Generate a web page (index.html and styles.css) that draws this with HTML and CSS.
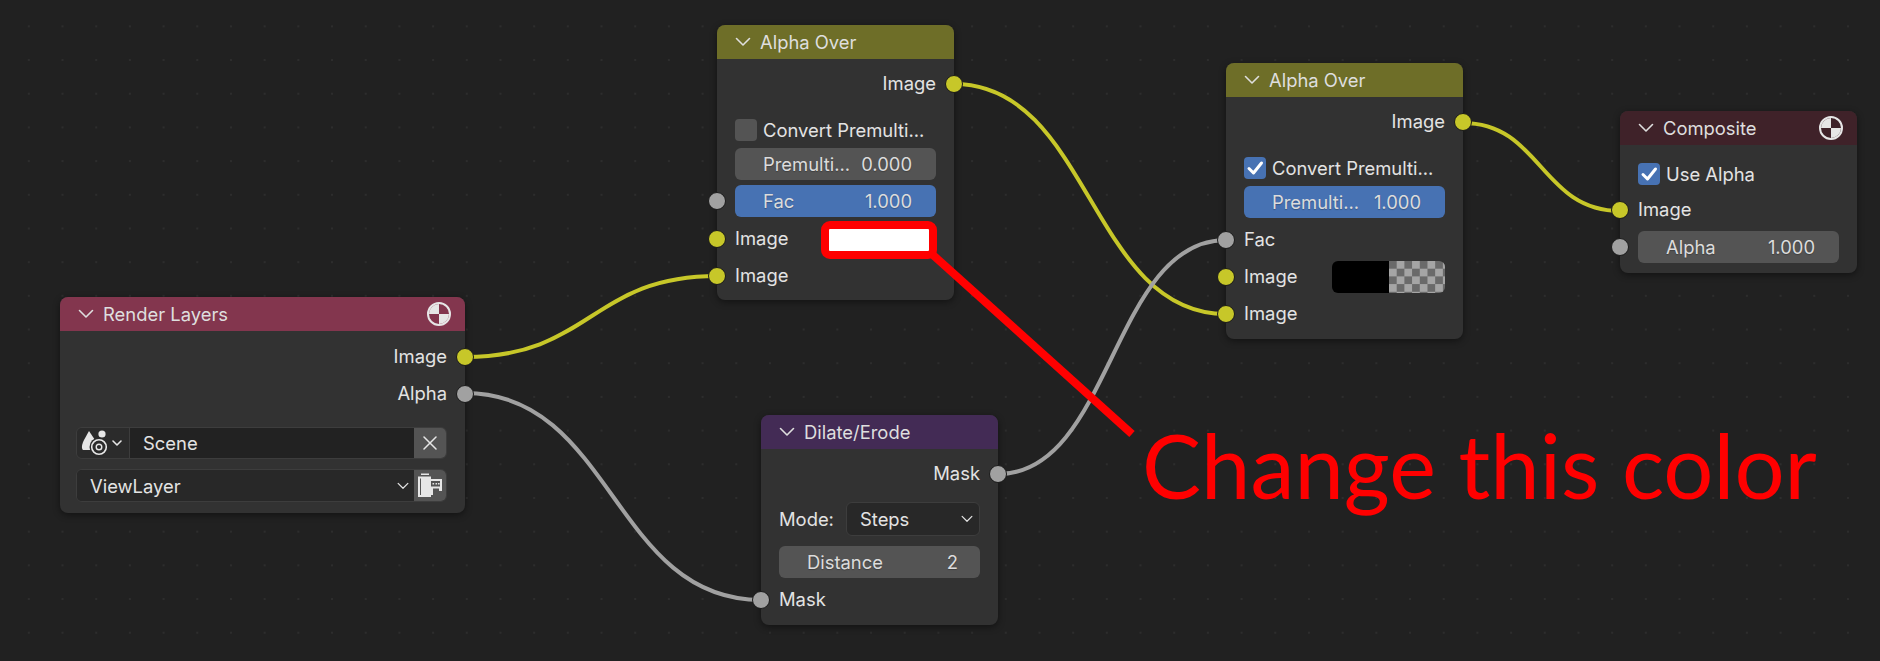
FILE: index.html
```html
<!DOCTYPE html>
<html lang="en">
<head>
    <meta charset="UTF-8">
    <title>Compositor nodes</title>
    <link rel="stylesheet" href="styles.css">
</head>
<body>
    <svg width="0" height="0" class="defs">
        <defs>
            <symbol id="chevron" viewBox="0 0 16 10">
                <path d="M1.5 1.5 L8 8 L14.5 1.5" fill="none" stroke="currentColor" stroke-width="1.6" stroke-linecap="round" stroke-linejoin="round"/>
            </symbol>
            <symbol id="disc" viewBox="0 0 24 24">
                <circle cx="12" cy="12" r="11" fill="none" stroke="#e6e6e6" stroke-width="2"/>
                <path d="M12 12 L12 2 A10 10 0 0 0 2 12 Z M12 12 L22 12 A10 10 0 0 1 12 22 Z" fill="#e6e6e6"/>
            </symbol>
            <symbol id="tick" viewBox="0 0 22 22">
                <path d="M5 11.5 L9.5 16 L17.5 6" fill="none" stroke="#fff" stroke-width="3" stroke-linecap="round" stroke-linejoin="round"/>
            </symbol>
        </defs>
    </svg>

    <div class="canvas">
        <svg class="wires" width="1880" height="661">
            <path class="wire yellow" d="M465 357 C591 357 591 276 717 276"/>
            <path class="wire grey" d="M465 393 C613 393 613 600 761 600"/>
            <path class="wire yellow" d="M954 84 C1090 84 1090 314 1226 314"/>
            <path class="wire grey" d="M998 474 C1112 474 1112 240 1226 240"/>
            <path class="wire yellow" d="M1463 123 C1541 123 1541 211 1620 211"/>
        </svg>

        <div class="node node-render">
            <div class="node-header header-render">
                <svg class="chevron"><use href="#chevron"/></svg>
                <span>Render Layers</span>
                <svg class="disc"><use href="#disc"/></svg>
            </div>
            <div class="node-body body-render">
                <div class="row out"><span>Image</span><i class="socket yellow"></i></div>
                <div class="row out"><span>Alpha</span><i class="socket grey"></i></div>
                <div class="field-group scene-group">
                    <div class="icon-drop">
                        <svg width="44" height="30" viewBox="0 0 44 30">
                            <path d="M8 3 L16 15 L13 22 L2 22 C0 20 1 16 3 12 Z" fill="#e6e6e6"/>
                            <circle cx="21" cy="6" r="3.600" fill="#e6e6e6"/>
                            <circle cx="18" cy="19" r="9.500" fill="#2b2b2b"/>
                            <circle cx="18" cy="19" r="7.300" fill="none" stroke="#e6e6e6" stroke-width="1.600"/>
                            <circle cx="18" cy="19" r="2.800" fill="none" stroke="#e6e6e6" stroke-width="1.400"/>
                            <path d="M32 13 L36 17 L40 13" fill="none" stroke="#e6e6e6" stroke-width="1.600" stroke-linecap="round" stroke-linejoin="round"/>
                        </svg>
                    </div>
                    <div class="scene-name">Scene</div>
                    <div class="icon-btn">
                        <svg width="14" height="14" viewBox="0 0 14 14">
                            <path d="M1 1 L13 13 M13 1 L1 13" stroke="#e6e6e6" stroke-width="1.500" stroke-linecap="round"/>
                        </svg>
                    </div>
                </div>
                <div class="field-group layer-group">
                    <div class="layer-name">
                        <span>ViewLayer</span>
                        <svg class="chevron-small"><use href="#chevron"/></svg>
                    </div>
                    <div class="icon-btn">
                        <svg width="26" height="26" viewBox="0 0 26 26">
                            <path d="M4 0.500 H12 V2 H4 Z" fill="#e6e6e6"/>
                            <path d="M1 3.500 H14 V6 H25 V18 H22 V15.500 H16 V22 H14 V24 H1 Z" fill="#e6e6e6"/>
                            <path d="M3 5.500 H4 V22 H3 Z" fill="#545454"/>
                            <path d="M14 8 V13.500 H23 V8 Z" fill="#545454"/>
                            <path d="M15.500 10 h1.600 v1.600 h-1.600 Z M18.500 10 h1.600 v1.600 h-1.600 Z M21 10 h1.600 v1.600 h-1.600 Z" fill="#e6e6e6"/>
                        </svg>
                    </div>
                </div>
            </div>
        </div>

        <div class="node node-over-a">
            <div class="node-header header-over">
                <svg class="chevron"><use href="#chevron"/></svg>
                <span>Alpha Over</span>
            </div>
            <div class="node-body">
                <div class="row out"><span>Image</span><i class="socket yellow"></i></div>
                <div class="check-row props-first">
                    <div class="checkbox"></div>
                    <span>Convert Premulti...</span>
                </div>
                <div class="slider"><span>Premulti...</span><span>0.000</span></div>
                <div class="slider blue slider-fac"><span>Fac</span><span>1.000</span><i class="socket grey"></i></div>
                <div class="row color-row">
                    <span>Image</span><i class="socket yellow"></i>
                    <div class="swatch swatch-white"></div>
                </div>
                <div class="row"><span>Image</span><i class="socket yellow"></i></div>
            </div>
        </div>

        <div class="node node-over-b">
            <div class="node-header header-over">
                <svg class="chevron"><use href="#chevron"/></svg>
                <span>Alpha Over</span>
            </div>
            <div class="node-body">
                <div class="row out"><span>Image</span><i class="socket yellow"></i></div>
                <div class="check-row props-first">
                    <div class="checkbox on"><svg width="22" height="22"><use href="#tick"/></svg></div>
                    <span>Convert Premulti...</span>
                </div>
                <div class="slider blue"><span>Premulti...</span><span>1.000</span></div>
                <div class="row"><span>Fac</span><i class="socket grey"></i></div>
                <div class="row color-row">
                    <span>Image</span><i class="socket yellow"></i>
                    <div class="swatch swatch-alpha"><div class="swatch-black"></div><div class="swatch-checker"></div></div>
                </div>
                <div class="row"><span>Image</span><i class="socket yellow"></i></div>
            </div>
        </div>

        <div class="node node-composite">
            <div class="node-header header-composite">
                <svg class="chevron"><use href="#chevron"/></svg>
                <span>Composite</span>
                <svg class="disc"><use href="#disc"/></svg>
            </div>
            <div class="node-body">
                <div class="check-row check-first">
                    <div class="checkbox on"><svg width="22" height="22"><use href="#tick"/></svg></div>
                    <span>Use Alpha</span>
                </div>
                <div class="row"><span>Image</span><i class="socket yellow"></i></div>
                <div class="slider"><span>Alpha</span><span>1.000</span><i class="socket grey"></i></div>
            </div>
        </div>

        <div class="node node-dilate">
            <div class="node-header header-dilate">
                <svg class="chevron"><use href="#chevron"/></svg>
                <span>Dilate/Erode</span>
            </div>
            <div class="node-body">
                <div class="row out"><span>Mask</span><i class="socket grey"></i></div>
                <div class="mode-row">
                    <span>Mode:</span>
                    <div class="select"><span>Steps</span><svg class="chevron-small"><use href="#chevron"/></svg></div>
                </div>
                <div class="slider slider-distance"><span>Distance</span><span class="value-int">2</span></div>
                <div class="row"><span>Mask</span><i class="socket grey"></i></div>
            </div>
        </div>

        <!-- annotation drawn on top of the screenshot -->
        <svg class="annotation" width="1880" height="661">
            <rect x="825" y="225" width="108" height="30" rx="5" fill="none" stroke="#ff0000" stroke-width="8"/>
            <path d="M933 255 L1132 434" stroke="#ff0000" stroke-width="8"/>
        </svg>
        <div class="annotation-text">Change this color</div>
    </div>
</body>
</html>
```

FILE: styles.css
```css
* {
    box-sizing: border-box;
}

html, body {
    margin: 0;
    padding: 0;
    background-color: #212121;
}

body {
    width: 1880px;
    height: 661px;
    overflow: hidden;
    font-family: Inter, "Noto Sans", sans-serif;
    font-size: 18.4px;
    color: #e3e3e3;
}

.defs {
    position: absolute;
}

.canvas {
    position: relative;
    width: 1880px;
    height: 661px;
    background-color: #212121;
    background-image: radial-gradient(circle at center, #2d2d2d 0, #2d2d2d 1px, transparent 1.5px);
    background-size: 33.7px 33.7px;
    background-position: 12px 9.5px;
}

.wires,
.annotation {
    position: absolute;
    left: 0;
    top: 0;
}

.wire {
    fill: none;
    stroke-width: 4;
}

.wire.yellow {
    stroke: #c7c729;
}

.wire.grey {
    stroke: #a1a1a1;
}

/* nodes sit on a free canvas */
.node {
    position: absolute;
    width: 237px;
    background-color: #323232;
    border-radius: 8px;
    box-shadow: 0 2px 7px rgba(0, 0, 0, 0.45);
}

.node-render {
    left: 60px;
    top: 297px;
    width: 405px;
    height: 216px;
}

.node-over-a {
    left: 717px;
    top: 25px;
    height: 275px;
}

.node-over-b {
    left: 1226px;
    top: 63px;
    height: 276px;
}

.node-composite {
    left: 1620px;
    top: 111px;
    height: 162px;
}

.node-dilate {
    left: 761px;
    top: 415px;
    height: 210px;
}

.node-header {
    display: flex;
    align-items: center;
    height: 34px;
    padding: 0 14px 0 18px;
    border-radius: 8px 8px 0 0;
    color: #dedede;
}

.header-render {
    background-color: #83364e;
}

.header-over {
    background-color: #6e6e28;
}

.header-composite {
    background-color: #3f2229;
}

.header-dilate {
    background-color: #432b55;
}

.chevron {
    width: 16px;
    height: 10px;
    margin-right: 9px;
}

.disc {
    width: 24px;
    height: 24px;
    margin-left: auto;
}

.node-body {
    padding: 6px 18px 0;
}

.body-render {
    padding: 7px 18px 0 16px;
}

.row {
    position: relative;
    display: flex;
    align-items: center;
    height: 37px;
}

.row > span {
    margin-top: -1px;
}

.row.out {
    justify-content: flex-end;
}

.socket {
    position: absolute;
    left: -27px;
    top: 50%;
    width: 18px;
    height: 18px;
    margin-top: -9px;
    border: 1.5px solid #1a1a1a;
    border-radius: 50%;
}

.socket.yellow {
    background-color: #c7c729;
}

.socket.grey {
    background-color: #a1a1a1;
}

.row.out .socket {
    left: auto;
    right: -27px;
}

.field-group {
    display: flex;
    height: 32px;
    border: 1px solid #3d3d3d;
    border-radius: 6px;
    overflow: hidden;
}

.scene-group {
    margin-top: 15px;
}

.layer-group {
    height: 33px;
    margin-top: 10px;
    background-color: #282828;
}

.icon-drop {
    display: flex;
    align-items: center;
    justify-content: center;
    width: 53px;
    background-color: #2b2b2b;
    border-right: 1px solid #3d3d3d;
}

.scene-name {
    flex: 1;
    display: flex;
    align-items: center;
    padding-left: 13px;
    background-color: #222222;
}

.layer-name {
    flex: 1;
    display: flex;
    align-items: center;
    justify-content: space-between;
    padding: 0 5px 0 13px;
    background-color: #282828;
}

.icon-btn {
    display: flex;
    align-items: center;
    justify-content: center;
    width: 32px;
    background-color: #545454;
}

.chevron-small {
    width: 12px;
    height: 8px;
}

.check-row {
    display: flex;
    align-items: center;
    gap: 6px;
    height: 29px;
    white-space: nowrap;
}

.props-first {
    margin-top: 13px;
}

.check-first {
    margin-top: 8px;
    margin-bottom: 3px;
}

.checkbox {
    width: 22px;
    height: 22px;
    border-radius: 4px;
    background-color: #545454;
}

.checkbox.on {
    background-color: #4772b3;
}

.slider {
    position: relative;
    display: flex;
    align-items: center;
    justify-content: space-between;
    height: 32px;
    margin-top: 4px;
    padding: 0 24px 0 28px;
    border-radius: 6px;
    background-color: #545454;
    white-space: nowrap;
    color: #dcdcdc;
    text-shadow: 0 1px 1px rgba(0, 0, 0, 0.25);
}

.slider.blue {
    background-color: #4772b3;
}

.slider-fac {
    margin-top: 5px;
}

.row + .slider {
    margin-top: 3px;
}

.slider + .row {
    margin-top: 3px;
}

.color-row {
    justify-content: space-between;
}

.swatch {
    width: 113px;
    height: 32px;
    border-radius: 6px;
    overflow: hidden;
}

.swatch-white {
    background-color: #ffffff;
}

.swatch-alpha {
    display: flex;
}

.swatch-black {
    width: 57px;
    background-color: #000000;
}

.swatch-checker {
    flex: 1;
    background-color: #6a6a6a;
    background-image: conic-gradient(#a5a5a5 25%, transparent 0 50%, #a5a5a5 0 75%, transparent 0);
    background-size: 15.4px 15.4px;
}

.mode-row {
    display: flex;
    align-items: center;
    justify-content: space-between;
    height: 34px;
    margin-top: 10px;
}

.select {
    display: flex;
    align-items: center;
    justify-content: space-between;
    width: 134px;
    height: 34px;
    padding: 0 6px 0 13px;
    border: 1px solid #3d3d3d;
    border-radius: 6px;
    background-color: #282828;
}

.slider-distance {
    margin-top: 10px;
}

.value-int {
    margin-right: -2px;
}

.annotation-text {
    position: absolute;
    left: 1142px;
    top: 410px;
    font-family: Lato, "Noto Sans", sans-serif;
    font-size: 88.5px;
    line-height: 110px;
    color: #ff0000;
    white-space: nowrap;
}
```
